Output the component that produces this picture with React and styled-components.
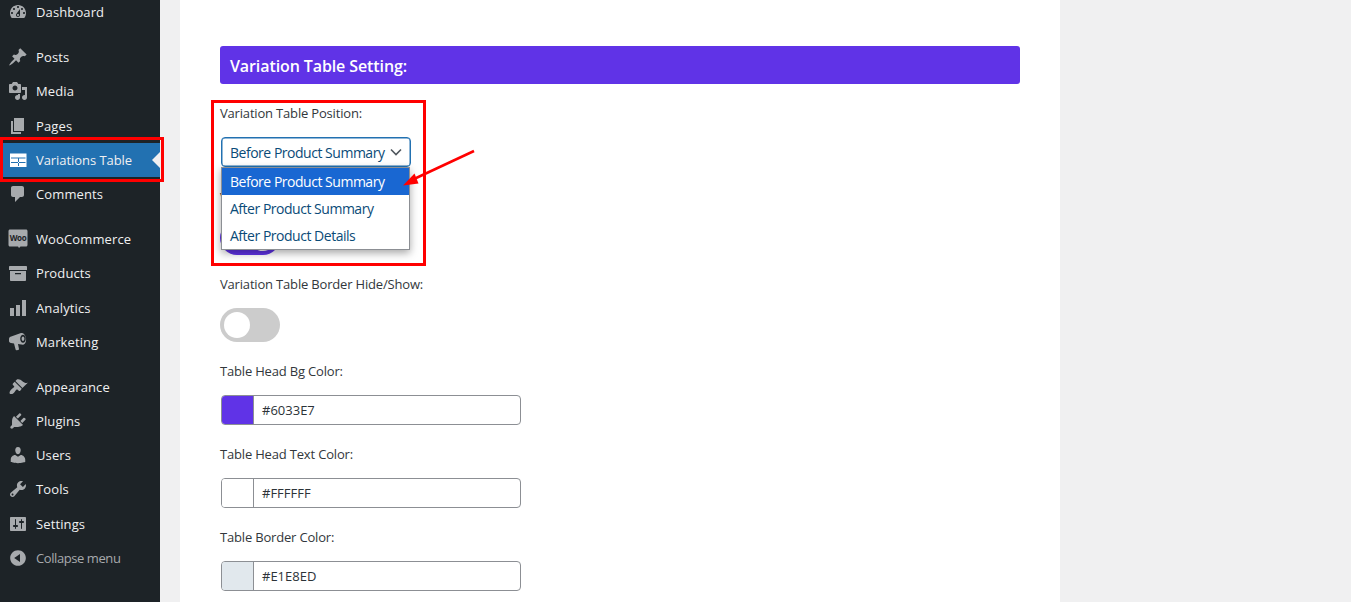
import React from "react";
import styled, { createGlobalStyle } from "styled-components";

const GlobalStyle = createGlobalStyle`
  html, body {
    margin: 0;
    height: 100%;
    overflow: hidden;
    background: #f0f0f1;
    font-family: "Open Sans", "Noto Sans", sans-serif;
  }
`;

const Page = styled.div`
  position: relative;
  display: flex;
  width: 1351px;
  height: 602px;
  overflow: hidden;
`;

// Admin menu
const Sidebar = styled.nav`
  flex: 0 0 160px;
  background: #1d2327;
`;

const Menu = styled.ul`
  list-style: none;
  margin: -5px 0 0;
  padding: 0;
`;

const MenuItem = styled.li`
  position: relative;
  display: flex;
  align-items: center;
  gap: 8px;
  height: 34.25px;
  padding-left: 8px;
  margin-top: ${(p) => (p.$gap ? "10.7px" : "0")};
  font-size: 13px;
  letter-spacing: ${(p) => (p.$muted ? "-0.42px" : p.$active ? "-0.06px" : "0.12px")};
  white-space: nowrap;
  color: ${(p) => (p.$muted ? "#a7aaad" : "#f0f0f1")};
  background: ${(p) => (p.$active ? "#2271b1" : "transparent")};

  svg {
    flex: 0 0 20px;
    width: 20px;
    height: 20px;
    fill: ${(p) => (p.$active ? "#fff" : "#a7aaad")};
  }

  ${(p) =>
    p.$active &&
    `&::after {
      content: "";
      position: absolute;
      right: 0;
      top: 50%;
      margin-top: -8px;
      border: 8px solid transparent;
      border-right-color: #f0f0f1;
    }`}
`;

// Settings card
const Main = styled.main`
  flex: 1;
  padding-left: 20px;
`;

const Card = styled.section`
  width: 880px;
  height: 602px;
  box-sizing: border-box;
  padding: 46px 40px 0;
  background: #fff;
`;

const Heading = styled.h2`
  margin: 0 0 19px;
  height: 38px;
  padding-left: 10px;
  line-height: 40px;
  font-size: 16px;
  font-weight: 600;
  letter-spacing: -0.1px;
  color: #fff;
  background: #6033e7;
  border-radius: 3px;
`;

const Field = styled.div`
  margin-bottom: ${(p) => (p.$loose ? "20px" : "19px")};
`;

const Label = styled.div`
  height: 20px;
  line-height: 20px;
  margin-bottom: 14px;
  font-size: 13px;
  font-weight: 500;
  letter-spacing: -0.18px;
  white-space: nowrap;
  color: #32373c;
`;

const SelectWrap = styled.div`
  position: relative;
  width: 190px;
  margin-left: 1px;
`;

const SelectBox = styled.div`
  display: flex;
  align-items: center;
  justify-content: space-between;
  box-sizing: border-box;
  height: 30px;
  padding: 0 7px 0 8px;
  border: 1px solid #2271b1;
  border-radius: 4px;
  box-shadow: 0 0 0 0.5px #2271b1 inset;
  font-size: 14px;
  letter-spacing: -0.48px;
  white-space: nowrap;
  color: #0a4b78;

  svg {
    flex: 0 0 14px;
    width: 14px;
    height: 14px;
    fill: none;
    stroke: #50575e;
    stroke-width: 1.6;
  }
`;

const Dropdown = styled.ul`
  position: absolute;
  z-index: 2;
  top: 30px;
  left: 0;
  width: 189px;
  box-sizing: border-box;
  margin: 0;
  padding: 0;
  list-style: none;
  background: #fff;
  border: 1px solid #8c8f94;
  box-shadow: 0 3px 8px rgba(0, 0, 0, 0.35);
`;

const Option = styled.li`
  height: 27px;
  line-height: 27px;
  padding-left: 8px;
  font-size: 14px;
  letter-spacing: -0.48px;
  white-space: nowrap;
  color: ${(p) => (p.$selected ? "#fff" : "#0a4b78")};
  background: ${(p) => (p.$selected ? "#1967d2" : "#fff")};
`;

const Toggle = styled.div`
  position: relative;
  width: 60px;
  height: 34px;
  border-radius: 17px;
  background: ${(p) => (p.$on ? "#6033e7" : "#ccc")};

  &::before {
    content: "";
    position: absolute;
    top: 4px;
    left: ${(p) => (p.$on ? "30px" : "4px")};
    width: 26px;
    height: 26px;
    border-radius: 50%;
    background: #fff;
  }
`;

const ColorInput = styled.div`
  display: flex;
  align-items: center;
  box-sizing: border-box;
  width: 300px;
  height: 30px;
  margin-left: 1px;
  overflow: hidden;
  border: 1px solid #8c8f94;
  border-radius: 4px;
  font-size: 13px;
  color: #2c3338;
`;

const Swatch = styled.span`
  flex: 0 0 32px;
  box-sizing: border-box;
  height: 100%;
  margin-right: 8px;
  border-right: 1px solid #8c8f94;
  background: ${(p) => p.$color};
`;

// Annotations drawn over the screenshot
const RedFrame = styled.div`
  position: absolute;
  z-index: 3;
  left: ${(p) => p.$left}px;
  top: ${(p) => p.$top}px;
  width: ${(p) => p.$width}px;
  height: ${(p) => p.$height}px;
  box-sizing: border-box;
  border: 3px solid #f00;
`;

const ArrowMark = styled.svg`
  position: absolute;
  z-index: 3;
  left: 400px;
  top: 146px;
  width: 80px;
  height: 44px;
`;

const icons = {
  dashboard:
    "M3.76 16h12.48c1.1-1.37 1.76-3.11 1.76-5 0-4.42-3.58-8-8-8s-8 3.58-8 8c0 1.89.66 3.63 1.76 5zM10 4c.55 0 1 .45 1 1s-.45 1-1 1-1-.45-1-1 .45-1 1-1zM6 6c.55 0 1 .45 1 1s-.45 1-1 1-1-.45-1-1 .45-1 1-1zm8 0c.55 0 1 .45 1 1s-.45 1-1 1-1-.45-1-1 .45-1 1-1zm-5.37 5.55L12 7v6c0 1.1-.9 2-2 2s-2-.9-2-2c0-.57.24-1.08.63-1.45zM4 10c.55 0 1 .45 1 1s-.45 1-1 1-1-.45-1-1 .45-1 1-1zm12 0c.55 0 1 .45 1 1s-.45 1-1 1-1-.45-1-1 .45-1 1-1zm-5 3c0-.55-.45-1-1-1s-1 .45-1 1 .45 1 1 1 1-.45 1-1z",
  posts:
    "M10.44 3.02l1.82-1.82 6.36 6.35-1.83 1.82c-1.05-.68-2.48-.57-3.41.36l-.75.75c-.92.93-1.04 2.35-.35 3.41l-1.83 1.82-2.41-2.41-2.8 2.79c-.42.42-3.38 2.71-3.8 2.29s1.86-3.39 2.28-3.81l2.79-2.79L4.1 9.36l1.83-1.82c1.05.69 2.48.57 3.4-.36l.75-.75c.93-.92 1.05-2.35.36-3.41z",
  media:
    "M13 11V4c0-.55-.45-1-1-1h-1.67L9 1H5L3.67 3H2c-.55 0-1 .45-1 1v7c0 .55.45 1 1 1h10c.55 0 1-.45 1-1zM7 4.5c1.38 0 2.5 1.12 2.5 2.5S8.38 9.5 7 9.5 4.5 8.38 4.5 7 5.62 4.5 7 4.5zM14 6h5v10.5c0 1.38-1.12 2.5-2.5 2.5S14 17.88 14 16.5s1.12-2.5 2.5-2.5c.17 0 .34.02.5.05V9h-3V6zm-4 8.05V13h2v3.5c0 1.38-1.12 2.5-2.5 2.5S7 17.88 7 16.5 8.12 14 9.5 14c.17 0 .34.02.5.05z",
  pages: "M6 15V2h10v13H6zm-1 1h8v2H3V5h2v11z",
  table:
    "M2 3.500h16.500V17H2zM3 7.500v1h14.500v-1zM3 12v1h14.500v-1zM10 8.500V16h1V8.500z",
  comments:
    "M5 2h9c1.1 0 2 .9 2 2v7c0 1.1-.9 2-2 2h-2l-5 5v-5H5c-1.1 0-2-.9-2-2V4c0-1.1.9-2 2-2z",
  products:
    "M19 4v3H1V4c0-.55.45-1 1-1h16c.55 0 1 .45 1 1zM18 8v9c0 .55-.45 1-1 1H3c-.55 0-1-.45-1-1V8h16zM7 10v1.2h6V10H7z",
  analytics: "M18 18V2h-4v16h4zm-6 0V7H8v11h4zm-6 0v-8H2v8h4z",
  marketing:
    "M1 7c0-1 .5-2 1.500-2.300L13 1c2-.6 4.500 1.500 5 5s-.7 6.300-3 6.700L10 12l1 5c.1.5-.2.8-.7.9l-1.700.3c-.5.1-.9-.2-1-.7L6 11.500 3 11c-1.200-.2-2-1-2-2zM15 2.700c-1.600 0-2.800 1.800-2.800 4s1.200 4 2.800 4 2.800-1.800 2.800-4-1.200-4-2.800-4zm0 1.800c.8 0 1.400 1 1.400 2.200s-.6 2.200-1.400 2.200-1.400-1-1.400-2.200.6-2.200 1.400-2.200z",
  appearance:
    "M14.48 11.06L7.41 3.99l1.5-1.5c.5-.56 2.3-.47 3.51.32 1.21.8 1.43 1.28 2.91 2.1 1.18.64 2.45 1.26 4.45.85zm-.71.71L6.7 4.7 4.93 6.47c-.39.39-.39 1.02 0 1.41l1.06 1.06c.39.39.39 1.03 0 1.42-.6.6-1.43 1.11-2.21 1.69-.35.26-.7.53-1.01.84-1.43 1.43-1.4 3.4-.9 3.9.5.5 2.47.53 3.9-.9.31-.31.58-.66.84-1.01.58-.78 1.09-1.61 1.69-2.21.39-.39 1.03-.39 1.42 0l1.06 1.06c.39.39 1.02.39 1.41 0z",
  plugins:
    "M13.11 4.36L9.87 7.6 8 5.73l3.24-3.24c.35-.34 1.05-.2 1.56.32.52.51.66 1.21.31 1.55zm-8 1.77l.91-1.12 9.01 9.01-1.19.84c-.71.71-2.63 1.16-3.82 1.16H6.14L4.9 17.26c-.59.59-1.54.59-2.12 0-.59-.58-.59-1.53 0-2.12l1.24-1.24v-3.88c0-1.13.4-3.19 1.09-3.89zm7.26 3.97l3.24-3.24c.34-.35 1.04-.21 1.55.31.52.51.66 1.21.31 1.55l-3.24 3.25z",
  users:
    "M10 9.25c-2.27 0-2.73-3.44-2.73-3.44C7 4.02 7.82 2 9.97 2c2.16 0 2.98 2.02 2.71 3.81 0 0-.41 3.44-2.68 3.44zm0 2.57L12.72 10c2.39 0 4.52 2.33 4.52 4.53v2.49s-3.65 1.13-7.24 1.13c-3.65 0-7.24-1.13-7.24-1.13v-2.49c0-2.25 1.94-4.48 4.47-4.48z",
  tools:
    "M16.68 9.77c-1.34 1.34-3.3 1.67-4.95.99l-5.41 6.52c-.99.99-2.59.99-3.58 0s-.99-2.59 0-3.57l6.52-5.42c-.68-1.65-.35-3.61.99-4.95 1.28-1.28 3.12-1.62 4.72-1.06l-2.89 2.89 2.82 2.82 2.86-2.87c.53 1.58.18 3.39-1.08 4.65zM3.81 16.21c.4.39 1.04.39 1.43 0 .4-.4.4-1.04 0-1.43-.39-.4-1.03-.4-1.43 0-.39.39-.39 1.03 0 1.43z",
  settings:
    "M18 16V4c0-.55-.45-1-1-1H3c-.55 0-1 .45-1 1v12c0 .55.45 1 1 1h14c.55 0 1-.45 1-1zM8 11h1c.55 0 1 .45 1 1s-.45 1-1 1H8v1.5c0 .28-.22.5-.5.5s-.5-.22-.5-.5V13H6c-.55 0-1-.45-1-1s.45-1 1-1h1V5.5c0-.28.22-.5.5-.5s.5.22.5.5V11zm5-2h-1c-.55 0-1-.45-1-1s.45-1 1-1h1V5.5c0-.28.22-.5.5-.5s.5.22.5.5V7h1c.55 0 1 .45 1 1s-.45 1-1 1h-1v5.5c0 .28-.22.5-.5.5s-.5-.22-.5-.5V9z",
  collapse:
    "M10 2.16c4.33 0 7.84 3.51 7.84 7.84s-3.51 7.84-7.84 7.84S2.16 14.33 2.16 10 5.71 2.16 10 2.16zm2 11.72V6.12L6.18 9.97z",
};

const menu = [
  { icon: "dashboard", label: "Dashboard" },
  { icon: "posts", label: "Posts", gap: true },
  { icon: "media", label: "Media" },
  { icon: "pages", label: "Pages" },
  { icon: "table", label: "Variations Table", active: true },
  { icon: "comments", label: "Comments" },
  { icon: "woo", label: "WooCommerce", gap: true },
  { icon: "products", label: "Products" },
  { icon: "analytics", label: "Analytics" },
  { icon: "marketing", label: "Marketing" },
  { icon: "appearance", label: "Appearance", gap: true },
  { icon: "plugins", label: "Plugins" },
  { icon: "users", label: "Users" },
  { icon: "tools", label: "Tools" },
  { icon: "settings", label: "Settings" },
  { icon: "collapse", label: "Collapse menu", muted: true },
];

function MenuIcon({ name }) {
  if (name === "woo") {
    return (
      <svg viewBox="0 0 20 20">
        <path d="M2 .5h16c.8 0 1.500.7 1.500 1.500v14c0 .8-.7 1.500-1.500 1.500h-5.500l-1.500 1.500-1-1.500H2c-.8 0-1.500-.7-1.500-1.500V2C.5 1.200 1.200.5 2 .5z" />
        <text x="10" y="12" textAnchor="middle" fontSize="8" fontWeight="700" letterSpacing="-0.3" fill="#1d2327">
          Woo
        </text>
      </svg>
    );
  }
  return (
    <svg viewBox="0 0 20 20">
      <path d={icons[name]} fillRule="evenodd" />
    </svg>
  );
}

function ColorField({ label, color }) {
  return (
    <Field>
      <Label>{label}</Label>
      <ColorInput>
        <Swatch $color={color} />
        {color}
      </ColorInput>
    </Field>
  );
}

export default function App() {
  return (
    <Page>
      <GlobalStyle />
      <Sidebar>
        <Menu>
          {menu.map((item) => (
            <MenuItem key={item.label} $gap={item.gap} $active={item.active} $muted={item.muted}>
              <MenuIcon name={item.icon} />
              {item.label}
            </MenuItem>
          ))}
        </Menu>
      </Sidebar>
      <Main>
        <Card>
          <Heading>Variation Table Setting:</Heading>
          <Field $loose>
            <Label>Variation Table Position:</Label>
            <SelectWrap>
              <SelectBox>
                Before Product Summary
                <svg viewBox="0 0 14 14">
                  <path d="M2 4.500l5 5 5-5" />
                </svg>
              </SelectBox>
              <Dropdown>
                <Option $selected>Before Product Summary</Option>
                <Option>After Product Summary</Option>
                <Option>After Product Details</Option>
              </Dropdown>
            </SelectWrap>
          </Field>
          <Field>
            <Label>Variation Table Hide/Show:</Label>
            <Toggle $on />
          </Field>
          <Field>
            <Label>Variation Table Border Hide/Show:</Label>
            <Toggle />
          </Field>
          <ColorField label="Table Head Bg Color:" color="#6033E7" />
          <ColorField label="Table Head Text Color:" color="#FFFFFF" />
          <ColorField label="Table Border Color:" color="#E1E8ED" />
        </Card>
      </Main>
      <RedFrame $left={0} $top={137} $width={164} $height={45} />
      <RedFrame $left={211} $top={100} $width={215} $height={166} />
      <ArrowMark viewBox="0 0 80 44">
        <path d="M74 5L14 33" stroke="#f00" strokeWidth="2.500" fill="none" />
        <path d="M3 39.500L14.500 27.500l4 10z" fill="#f00" />
      </ArrowMark>
    </Page>
  );
}
